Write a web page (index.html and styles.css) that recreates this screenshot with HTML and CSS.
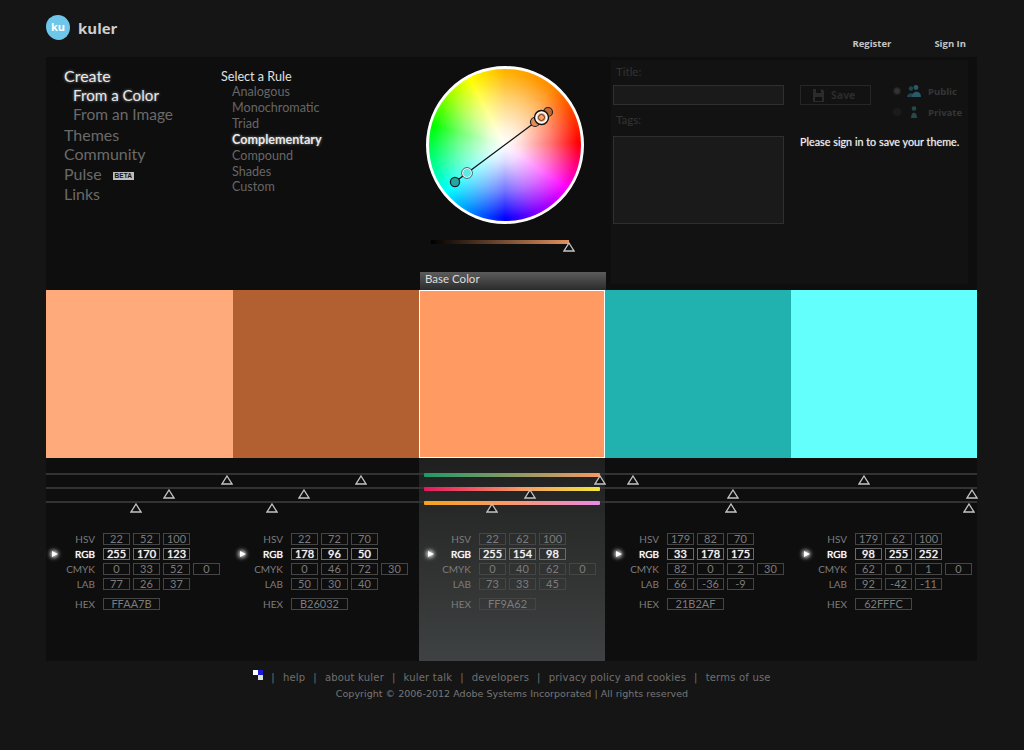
FILE: index.html
```html
<!DOCTYPE html>
<html lang="en">
<head>
<meta charset="utf-8">
<title>kuler</title>
<link rel="stylesheet" href="styles.css">
</head>
<body>
<svg class="defs" width="0" height="0" aria-hidden="true"><symbol id="tri" viewBox="0 0 12 10"><path d="M6 1 L11 9 H1 Z" fill="#111" stroke="#c4c4c4" stroke-width="1.300"/></symbol></svg>
<div class="app">
  <header class="top">
    <div class="brand"><span class="blob">ku</span><span class="word">kuler</span></div>
    <nav class="account"><a>Register</a><a>Sign In</a></nav>
  </header>

  <section class="panel">
    <nav class="menu">
      <a class="on">Create</a>
      <a class="sub on strong">From a Color</a>
      <a class="sub">From an Image</a>
      <a>Themes</a>
      <a>Community</a>
      <a>Pulse <span class="beta">BETA</span></a>
      <a>Links</a>
    </nav>
    <div class="rules">
      <div class="rules-title">Select a Rule</div>
      <a>Analogous</a>
      <a>Monochromatic</a>
      <a>Triad</a>
      <a class="on">Complementary</a>
      <a>Compound</a>
      <a>Shades</a>
      <a>Custom</a>
    </div>
    <div class="wheel-col">
      <div class="wheel">
        <svg class="wheel-marks" viewBox="0 0 158 158" width="158" height="158">
          <line x1="115.500" y1="51.500" x2="29" y2="116" stroke="#111" stroke-width="1.300"/>
          <circle cx="122" cy="46" r="4.500" fill="#c06a36" stroke="#222" stroke-width="1.200"/>
          <circle cx="109" cy="56" r="4.500" fill="#e08b58" stroke="#222" stroke-width="1.200"/>
          <circle cx="115.500" cy="51.500" r="7" fill="#ffa068" stroke="#111" stroke-width="1.400"/>
          <circle cx="115.500" cy="51.500" r="5.200" fill="#ffa068" stroke="#fff" stroke-width="1.600"/>
          <circle cx="115.500" cy="51.500" r="3" fill="#ffa068" stroke="#222" stroke-width=".8"/>
          <circle cx="41" cy="107" r="4.600" fill="#5fe8e4" stroke="#fff" stroke-width="1.300"/>
          <circle cx="41" cy="107" r="5.400" fill="none" stroke="#222" stroke-width=".7"/>
          <circle cx="29" cy="116" r="4.600" fill="#21a8a5" stroke="#222" stroke-width="1.300"/>
        </svg>
      </div>
      <div class="bright"><svg class="tri bright-tri"><use href="#tri"/></svg></div>
      <div class="base-tab">Base Color</div>
    </div>
    <form class="save">
      <div class="fields">
        <label>Title:</label>
        <div class="field"></div>
        <label class="tags-label">Tags:</label>
        <div class="field area"></div>
      </div>
      <div class="save-side">
        <div class="save-row">
          <div class="save-btn">
            <svg width="11" height="13" viewBox="0 0 11 13"><path d="M0 0 H9 L11 2 V13 H0 Z" fill="#2b2b2b"/><rect x="3" y="0" width="5" height="4" fill="#111"/><rect x="2" y="8" width="7" height="4" fill="#111"/></svg>
            <span>Save</span>
          </div>
          <div class="vis">
            <div class="vis-row">
              <i class="radio sel"></i>
              <svg width="15" height="12" viewBox="0 0 15 12"><circle cx="5" cy="3.500" r="2.200" fill="#1f4650"/><path d="M1 12 C1 7 9 7 9 12 Z" fill="#1f4650"/><circle cx="10" cy="2.500" r="2.400" fill="#2a5a68"/><path d="M6 12 C6 5 15 5 15 12 Z" fill="#2a5a68"/></svg>
              <span>Public</span>
            </div>
            <div class="vis-row">
              <i class="radio"></i>
              <svg width="15" height="12" viewBox="0 0 15 12"><circle cx="8" cy="2.500" r="2.300" fill="#264a46"/><path d="M5 12 C5 5 11 5 11 12 Z" fill="#264a46"/></svg>
              <span>Private</span>
            </div>
          </div>
        </div>
        <p class="notice">Please sign in to save your theme.</p>
      </div>
    </form>
  </section>

  <section class="swatches">
    <div class="sw s1"></div>
    <div class="sw s2"></div>
    <div class="sw s3"></div>
    <div class="sw s4"></div>
    <div class="sw s5"></div>
  </section>

  <section class="lower">
    <div class="hl"></div>
    <div class="tracks">
      <div class="track"><span class="bar b1"></span>
        <svg class="tri" style="left:175px"><use href="#tri"/></svg>
        <svg class="tri" style="left:309px"><use href="#tri"/></svg>
        <svg class="tri" style="left:548px"><use href="#tri"/></svg>
        <svg class="tri" style="left:581px"><use href="#tri"/></svg>
        <svg class="tri" style="left:812px"><use href="#tri"/></svg>
      </div>
      <div class="track"><span class="bar b2"></span>
        <svg class="tri" style="left:117px"><use href="#tri"/></svg>
        <svg class="tri" style="left:252px"><use href="#tri"/></svg>
        <svg class="tri" style="left:478px"><use href="#tri"/></svg>
        <svg class="tri" style="left:681px"><use href="#tri"/></svg>
        <svg class="tri" style="left:920px"><use href="#tri"/></svg>
      </div>
      <div class="track"><span class="bar b3"></span>
        <svg class="tri" style="left:84px"><use href="#tri"/></svg>
        <svg class="tri" style="left:220px"><use href="#tri"/></svg>
        <svg class="tri" style="left:440px"><use href="#tri"/></svg>
        <svg class="tri" style="left:679px"><use href="#tri"/></svg>
        <svg class="tri" style="left:917px"><use href="#tri"/></svg>
      </div>
    </div>
    <div class="values">
      <div class="col">
        <div class="row"><span class="lbl">HSV</span><b>22</b><b>52</b><b>100</b></div>
        <div class="row rgb"><i class="mark"></i><span class="lbl">RGB</span><b>255</b><b>170</b><b>123</b></div>
        <div class="row"><span class="lbl">CMYK</span><b>0</b><b>33</b><b>52</b><b>0</b></div>
        <div class="row"><span class="lbl">LAB</span><b>77</b><b>26</b><b>37</b></div>
        <div class="row hex"><span class="lbl">HEX</span><b>FFAA7B</b></div>
      </div>
      <div class="col">
        <div class="row"><span class="lbl">HSV</span><b>22</b><b>72</b><b>70</b></div>
        <div class="row rgb"><i class="mark"></i><span class="lbl">RGB</span><b>178</b><b>96</b><b>50</b></div>
        <div class="row"><span class="lbl">CMYK</span><b>0</b><b>46</b><b>72</b><b>30</b></div>
        <div class="row"><span class="lbl">LAB</span><b>50</b><b>30</b><b>40</b></div>
        <div class="row hex"><span class="lbl">HEX</span><b>B26032</b></div>
      </div>
      <div class="col">
        <div class="row"><span class="lbl">HSV</span><b>22</b><b>62</b><b>100</b></div>
        <div class="row rgb"><i class="mark"></i><span class="lbl">RGB</span><b>255</b><b>154</b><b>98</b></div>
        <div class="row"><span class="lbl">CMYK</span><b>0</b><b>40</b><b>62</b><b>0</b></div>
        <div class="row"><span class="lbl">LAB</span><b>73</b><b>33</b><b>45</b></div>
        <div class="row hex"><span class="lbl">HEX</span><b>FF9A62</b></div>
      </div>
      <div class="col">
        <div class="row"><span class="lbl">HSV</span><b>179</b><b>82</b><b>70</b></div>
        <div class="row rgb"><i class="mark"></i><span class="lbl">RGB</span><b>33</b><b>178</b><b>175</b></div>
        <div class="row"><span class="lbl">CMYK</span><b>82</b><b>0</b><b>2</b><b>30</b></div>
        <div class="row"><span class="lbl">LAB</span><b>66</b><b>-36</b><b>-9</b></div>
        <div class="row hex"><span class="lbl">HEX</span><b>21B2AF</b></div>
      </div>
      <div class="col">
        <div class="row"><span class="lbl">HSV</span><b>179</b><b>62</b><b>100</b></div>
        <div class="row rgb"><i class="mark"></i><span class="lbl">RGB</span><b>98</b><b>255</b><b>252</b></div>
        <div class="row"><span class="lbl">CMYK</span><b>62</b><b>0</b><b>1</b><b>0</b></div>
        <div class="row"><span class="lbl">LAB</span><b>92</b><b>-42</b><b>-11</b></div>
        <div class="row hex"><span class="lbl">HEX</span><b>62FFFC</b></div>
      </div>
    </div>
  </section>

  <footer class="foot">
    <div class="foot-links">
      <svg class="adobe" width="10" height="10" viewBox="0 0 10 10"><rect width="5" height="5" fill="#fff"/><rect x="5" width="5" height="5" fill="#1a1ad8"/><rect x="5" y="5" width="5" height="5" fill="#ddd"/></svg>
      <span>|</span><a>help</a><span>|</span><a>about kuler</a><span>|</span><a>kuler talk</a><span>|</span><a>developers</a><span>|</span><a>privacy policy and cookies</a><span>|</span><a>terms of use</a>
    </div>
    <div class="copy">Copyright © 2006-2012 Adobe Systems Incorporated | All rights reserved</div>
  </footer>
</div>
</body>
</html>
```
FILE: styles.css
```css
* { box-sizing: border-box; }
html, body { margin: 0; height: 750px; overflow: hidden; }
body { background: #151515; color: #777; font-family: Lato, "Open Sans", sans-serif; }
.defs { position: absolute; }
.app { width: 931px; margin-left: 46px; }

.top { height: 57px; display: flex; justify-content: space-between; position: relative; }
.brand { display: flex; align-items: center; gap: 8px; height: 25px; margin-top: 15px; }
.blob { width: 24px; height: 25px; background: #6ec6ea; border-radius: 50% 50% 46% 54% / 46% 50% 50% 54%; color: #fff; font: 700 11px/24px "Open Sans", sans-serif; text-align: center; }
.word { font: 700 15px/24px "Open Sans", sans-serif; color: #cfcfcf; }
.account { display: flex; gap: 43px; margin: 37px 11px 0 0; font: 700 9.500px/13px "Open Sans", sans-serif; color: #c4c4c4; }

.panel { height: 233px; background: #0e0e0e; display: grid; grid-template-columns: 175px 199px 186px 1fr; }
.menu { padding: 9px 0 0 18px; display: flex; flex-direction: column; font-size: 16px; line-height: 19.6px; color: #6a6a6a; }
.menu .sub { padding-left: 9px; font-size: 15.500px; }
.menu .strong { font-size: 15.200px; }
.menu .on { color: #e8e8e8; text-shadow: 0 0 3px rgba(255,255,255,.55); }
.beta { display: inline-block; margin-left: 7px; width: 21px; height: 8px; background: #bdbdbd; color: #111; font: 700 6.500px/8px "Liberation Sans", sans-serif; text-align: center; vertical-align: 2px; }
.rules { padding-top: 12px; display: flex; flex-direction: column; font-size: 12.600px; line-height: 15.900px; color: #666; }
.rules a { padding-left: 11px; }
.rules-title { color: #e0e0e0; height: 15px; }
.rules .on { color: #e8e8e8; font-weight: 700; text-shadow: 0 0 3px rgba(255,255,255,.5); }

.wheel-col { display: flex; flex-direction: column; align-items: center; position: relative; }
.wheel { width: 158px; height: 158px; margin: 9px 0 0 -17px; border-radius: 50%; border: 3px solid #fff; position: relative;
  background: radial-gradient(circle closest-side, #fff 0%, rgba(255,255,255,.85) 22%, rgba(255,255,255,.45) 60%, rgba(255,255,255,0) 96%),
    conic-gradient(#ffb400 0deg, #ff8a00 40deg, #ff0000 88deg, #ff0070 104deg, #ff00ff 125deg, #8000ff 155deg, #0000ff 180deg, #00a0ff 212deg, #00ffff 232deg, #00ff80 258deg, #00ff00 285deg, #a0ff00 312deg, #ffff00 332deg, #ffb400 360deg); }
.wheel-marks { position: absolute; left: -3px; top: -3px; }
.bright { width: 138px; height: 4px; margin: 16px 0 0 -27px; background: linear-gradient(90deg, #000, #e0915f); position: relative; }
.tri { position: absolute; width: 12px; height: 10px; overflow: visible; }
.bright-tri { right: -6px; top: 2px; }
.base-tab { position: absolute; left: 0; right: 0; bottom: 0; height: 18px; padding-left: 5px; background: linear-gradient(#5c5c5c, #2b2b2b); color: #ddd; font-size: 11.500px; line-height: 14px; }

.save { display: flex; margin: 3px 9px 6px 5px; padding: 4px 0 0 2px; background: #121212; }
.fields { width: 171px; display: flex; flex-direction: column; }
.fields label { color: #333; font-size: 11.500px; line-height: 15px; height: 21px; padding-left: 3px; }
.fields .tags-label { height: 24px; margin-top: 7px; }
.field { height: 20px; background: #1a1a1a; border: 1px solid #2f2f2f; flex: none; }
.field.area { height: 88px; }
.save-side { margin-left: 16px; flex: 1; }
.save-row { display: flex; margin-top: 21px; }
.save-btn { width: 71px; height: 20px; border: 1px solid #262626; display: flex; align-items: center; gap: 7px; padding-left: 12px; color: #2c2c2c; font: 700 10.500px "Open Sans", sans-serif; }
.vis { margin: -1px 0 0 22px; display: flex; flex-direction: column; gap: 7px; }
.vis-row { display: flex; align-items: center; gap: 5px; height: 14px; color: #363636; font: 700 9.500px "Open Sans", sans-serif; }
.vis-row span { margin-left: 2px; }
.radio { width: 8px; height: 8px; border-radius: 50%; background: #1b1b1b; }
.radio.sel { background: radial-gradient(circle, #333 35%, #1a1a1a 70%); }
.notice { margin: 15px 0 0; color: #eee; font-size: 10.800px; line-height: 16px; text-shadow: 0 0 1px rgba(255,255,255,.6); white-space: nowrap; }

.swatches { height: 168px; display: grid; grid-template-columns: 187px 186px 186px 186px 186px; }
.s1 { background: #ffaa7b; }
.s2 { background: #b26032; }
.s3 { background: #ff9a62; border: 1px solid #fff; }
.s4 { background: #21b2af; }
.s5 { background: #62fffc; }

.lower { height: 203px; background: #0e0e0e; position: relative; }
.hl { position: absolute; left: 373px; width: 186px; top: 0; bottom: 0; background: linear-gradient(#1f1f1f, #3f4242); }
.tracks { position: relative; padding-top: 15px; height: 73px; }
.track { height: 14px; border-top: 2px solid #333; position: relative; }
.track .tri { top: 0; }
.bar { position: absolute; left: 378px; width: 176px; height: 4px; top: -2px; border-radius: 1px; }
.b1 { background: linear-gradient(90deg, #1c9a68, #f79a62); }
.b2 { background: linear-gradient(90deg, #e8155f, #f79a62 55%, #f0e83c); }
.b3 { background: linear-gradient(90deg, #f4a31c, #fb9a62 45%, #e88ae8); }

.values { position: relative; display: grid; grid-template-columns: repeat(5, 188px); }
.row { display: flex; align-items: center; height: 15px; padding-left: 18px; font-size: 10px; color: #7c7c7c; }
.row.rgb { padding-left: 0; color: #fff; text-shadow: 0 0 1px #fff; }
.row.hex { margin-top: 5px; }
.mark { width: 0; height: 0; margin: 0 6px; border-left: 6px solid #fff; border-top: 3.500px solid transparent; border-bottom: 3.500px solid transparent; filter: drop-shadow(0 0 2px #fff) drop-shadow(0 0 2px #fff); }
.lbl { width: 31px; margin-right: 8px; text-align: right; white-space: nowrap; display: block; }
.row b { width: 27px; height: 12px; margin-right: 3px; border: 1px solid #454545; font-weight: 400; font-size: 11px; line-height: 10px; text-align: center; color: #7c7c7c; }
.row.rgb b { border-color: #6a6a6a; color: #f2f2f2; }
.row.hex b { width: 57px; }

.foot { text-align: center; width: 1024px; margin-left: -46px; font-family: "DejaVu Sans", sans-serif; font-size: 10px; color: #707070; }
.foot-links { display: flex; justify-content: center; align-items: center; gap: 8px; height: 16px; margin-top: 8px; letter-spacing: .2px; }
.adobe { margin: -4px 0 0; }
.copy { margin-top: 1px; line-height: 16px; font-size: 9.500px; letter-spacing: .03px; color: #777; }
```
